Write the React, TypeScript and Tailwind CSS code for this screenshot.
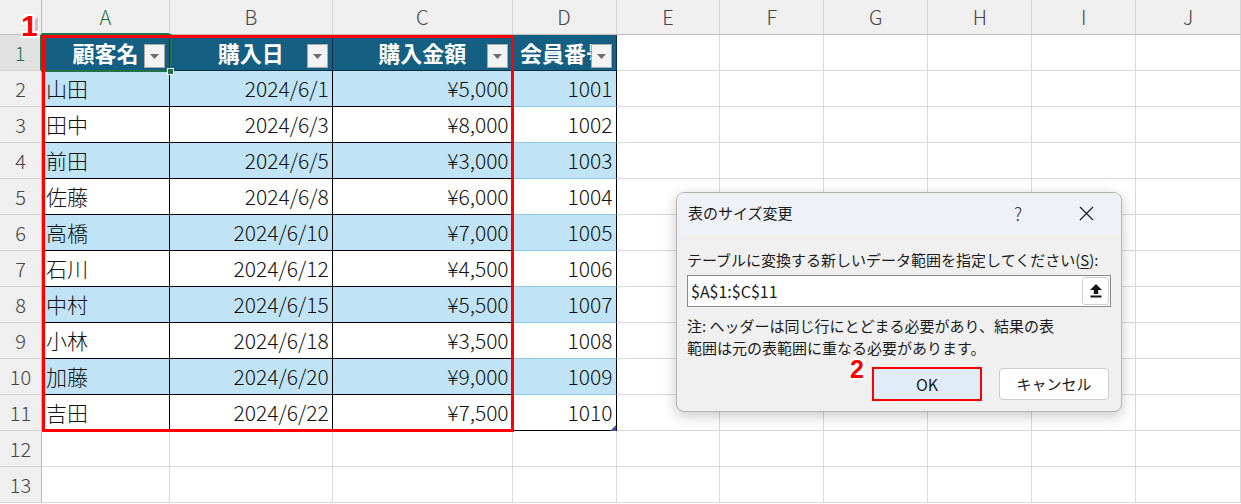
import React from 'react';

const widths = [
  'w-[42px]',
  'w-[128px]',
  'w-[163px]',
  'w-[180px]',
  'w-[104px]',
  'w-[104px]',
  'w-[104px]',
  'w-[104px]',
  'w-[104px]',
  'w-[104px]',
  'w-[105px]',
];

const letters = ['A', 'B', 'C', 'D', 'E', 'F', 'G', 'H', 'I', 'J'];

const data = [
  ['山田', '2024/6/1', '¥5,000', '1001'],
  ['田中', '2024/6/3', '¥8,000', '1002'],
  ['前田', '2024/6/5', '¥3,000', '1003'],
  ['佐藤', '2024/6/8', '¥6,000', '1004'],
  ['高橋', '2024/6/10', '¥7,000', '1005'],
  ['石川', '2024/6/12', '¥4,500', '1006'],
  ['中村', '2024/6/15', '¥5,500', '1007'],
  ['小林', '2024/6/18', '¥3,500', '1008'],
  ['加藤', '2024/6/20', '¥9,000', '1009'],
  ['吉田', '2024/6/22', '¥7,500', '1010'],
];

const headers = ['顧客名', '購入日', '購入金額', '会員番号'];

const FilterButton = () => (
  <div className="absolute right-[4px] bottom-[2px] w-[21px] h-[24px] bg-[#f3f3f3] border border-[#a9a9a9] flex items-center justify-center">
    <svg width="9" height="5" viewBox="0 0 9 5">
      <path d="M0 0 H9 L4.5 5 Z" fill="#6b6b6b" />
    </svg>
  </div>
);

const ColumnHeaderRow = () => (
  <div className="flex h-[35px]">
    <div className={`${widths[0]} h-full bg-[#efefef] border-r border-b border-[#bdbdbd] relative`}>
      <svg className="absolute right-[3px] bottom-[3px]" width="14" height="14" viewBox="0 0 14 14">
        <path d="M14 0 V14 H0 Z" fill="#c6c6c6" />
      </svg>
    </div>
    {letters.map((l, i) => (
      <div
        key={l}
        className={`${widths[i + 1]} h-full bg-[#efefef] border-r border-[#d4d4d4] flex items-center justify-center text-[20px] font-light ${
          i === 0 ? 'text-[#217346] border-b-2 border-b-[#217346]' : 'text-[#444] border-b border-b-[#bdbdbd]'
        }`}
      >
        {l}
      </div>
    ))}
  </div>
);

const RowHeader = ({ n, active }: { n: number; active?: boolean }) => (
  <div
    className={`${widths[0]} h-full flex items-center justify-center text-[20px] font-light border-b border-[#d4d4d4] ${
      active
        ? 'bg-[#e1e1e1] text-[#217346] border-r-2 border-r-[#217346]'
        : 'bg-[#efefef] text-[#444] border-r border-r-[#bdbdbd]'
    }`}
  >
    {n}
  </div>
);

const EmptyCells = () => (
  <>
    {widths.slice(5).map((w, i) => (
      <div key={i} className={`${w} h-full bg-white border-r border-b border-[#d9d9d9]`} />
    ))}
  </>
);

const TableHeaderRow = () => (
  <div className="flex h-[36px]">
    <RowHeader n={1} active />
    {headers.map((h, i) => (
      <div
        key={h}
        className={`${widths[i + 1]} h-full relative overflow-hidden bg-[#156082] border-r border-b border-[#0b2f40] flex items-center justify-center text-white font-bold text-[22px] whitespace-nowrap`}
      >
        {h}
        <FilterButton />
      </div>
    ))}
    <EmptyCells />
  </div>
);

const DataRow = ({ row, idx }: { row: string[]; idx: number }) => {
  const band = idx % 2 === 0;
  const bg = band ? 'bg-[#c0e4f5]' : 'bg-white';
  const last = idx === data.length - 1;
  return (
    <div className="flex h-[36px] font-light">
      <RowHeader n={idx + 2} />
      <div className={`${widths[1]} h-full ${bg} border-r border-b border-black flex items-center px-[4px] text-[21px] text-[#111]`}>
        {row[0]}
      </div>
      <div className={`${widths[2]} h-full ${bg} border-r border-b border-black flex items-center justify-end px-[3px] text-[21px] text-[#111]`}>
        {row[1]}
      </div>
      <div className={`${widths[3]} h-full ${bg} border-r border-b border-black flex items-center justify-end px-[3px] text-[21px] text-[#111]`}>
        {row[2]}
      </div>
      <div
        className={`${widths[4]} h-full ${bg} border-r border-r-black border-b ${
          last ? 'border-b-black' : 'border-b-[#8fcbe9]'
        } flex items-center justify-end px-[3px] text-[21px] text-[#111]`}
      >
        {row[3]}
      </div>
      <EmptyCells />
    </div>
  );
};

const BlankRow = ({ n }: { n: number }) => (
  <div className="flex h-[36px]">
    <RowHeader n={n} />
    {widths.slice(1).map((w, i) => (
      <div key={i} className={`${w} h-full bg-white border-r border-b border-[#d9d9d9]`} />
    ))}
  </div>
);

const UploadIcon = () => (
  <svg width="12" height="14" viewBox="0 0 12 14">
    <path d="M6 0 L12 6 H8.2 V10 H3.8 V6 H0 Z" fill="#111" />
    <rect x="0.5" y="11.5" width="11" height="2" fill="#111" />
  </svg>
);

const Dialog = () => (
  <div className="absolute left-[676px] top-[192px] w-[446px] h-[220px] rounded-[8px] border border-[#b4b4b4] bg-[#f0f0f0] shadow-[0_4px_14px_rgba(0,0,0,0.22)] overflow-hidden flex flex-col text-[15px] text-[#1b1b1b]">
    <div className="h-[41px] bg-[#eef2f7] flex items-center pl-[11px] pr-[27px]">
      <span className="flex-1">表のサイズ変更</span>
      <span className="text-[18px] font-light text-[#333] mr-[57px]">?</span>
      <svg width="15" height="15" viewBox="0 0 15 15">
        <path d="M1 1 L14 14 M14 1 L1 14" stroke="#222" strokeWidth="1.3" />
      </svg>
    </div>
    <div className="flex-1 flex flex-col px-[10px] pt-[16px]">
      <div className="leading-[20px] whitespace-nowrap">
        テーブルに変換する新しいデータ範囲を指定してください(<span className="underline underline-offset-2">S</span>):
      </div>
      <div className="mt-[5px] h-[32px] bg-white border border-[#8a8a8a] flex items-center pl-[3px] pr-[1px]">
        <span className="flex-1 text-[16px]">$A$1:$C$11</span>
        <div className="w-[27px] h-[28px] border border-[#cfcfcf] rounded-[3px] bg-white flex items-center justify-center">
          <UploadIcon />
        </div>
      </div>
      <div className="mt-[8px] leading-[22px]">
        <div>注: ヘッダーは同じ行にとどまる必要があり、結果の表</div>
        <div>範囲は元の表範囲に重なる必要があります。</div>
      </div>
      <div className="mt-[8px] flex justify-end gap-[17px] pr-[2px]">
        <div className="w-[110px] h-[34px] border-2 border-[#ff0000] bg-[#e0edf9] flex items-center justify-center text-[16px]">
          OK
        </div>
        <div className="w-[110px] h-[32px] mt-[1px] border border-[#cccccc] rounded-[4px] bg-white flex items-center justify-center text-[15px]">
          キャンセル
        </div>
      </div>
    </div>
  </div>
);

const App = () => {
  return (
    <div className="relative w-[1241px] h-[504px] overflow-hidden bg-white font-['Noto_Sans_CJK_JP','Noto_Sans',sans-serif] text-[#222]">
      <ColumnHeaderRow />
      <TableHeaderRow />
      {data.map((row, i) => (
        <DataRow key={i} row={row} idx={i} />
      ))}
      <BlankRow n={12} />
      <BlankRow n={13} />

      {/* selection on A1 */}
      <div className="absolute left-[41px] top-[34px] w-[131px] h-[38px] border-2 border-[#217346]" />
      <div className="absolute left-[167px] top-[68px] w-[7px] h-[7px] bg-[#217346] border border-white" />
      {/* table resize handle */}
      <div className="absolute left-[610px] top-[425px] w-[6px] h-[6px] bg-[#3f51b5] [clip-path:polygon(100%_0,100%_100%,0_100%)]" />

      {/* red highlight */}
      <div className="absolute left-[42px] top-[35px] w-[472px] h-[397px] border-[3px] border-[#ff0000]" />

      <Dialog />

      <div className="absolute left-[21px] top-[11px] text-[30px] leading-none font-bold text-[#ff0000] font-['Liberation_Sans',sans-serif] [text-shadow:2px_0_0_#fff,-2px_0_0_#fff,0_2px_0_#fff,0_-2px_0_#fff,2px_2px_0_#fff,-2px_-2px_0_#fff,2px_-2px_0_#fff,-2px_2px_0_#fff]">
        1
      </div>
      <div className="absolute left-[850px] top-[361px] text-[25px] leading-[16px] font-bold text-[#ff0000] font-['Liberation_Sans',sans-serif] [text-shadow:2px_0_0_#fff,-2px_0_0_#fff,0_2px_0_#fff,0_-2px_0_#fff,2px_2px_0_#fff,-2px_-2px_0_#fff,2px_-2px_0_#fff,-2px_2px_0_#fff]">
        2
      </div>
    </div>
  );
};

export default App;
